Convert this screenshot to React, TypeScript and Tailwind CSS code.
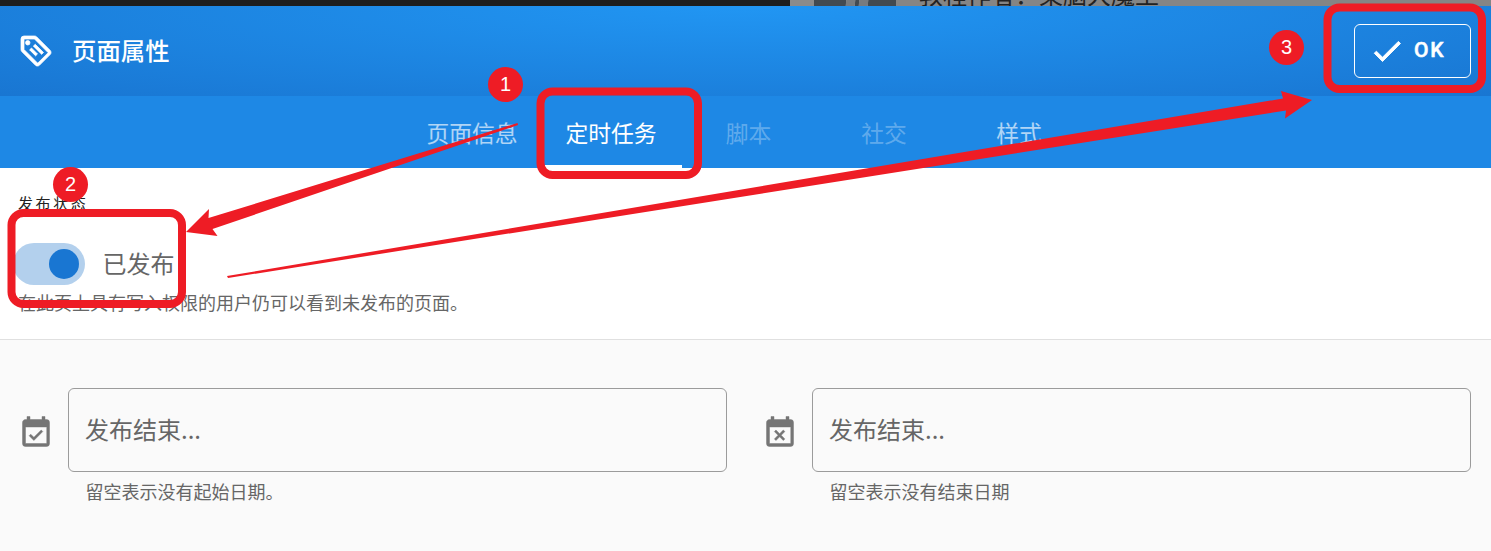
import type { ReactNode } from "react";

const RED = "#ee1c25";

function Icon({ d, className }: { d: string; className: string }) {
  return (
    <svg viewBox="0 0 24 24" className={className} fill="currentColor" aria-hidden="true">
      <path d={d} />
    </svg>
  );
}

const TAG =
  "M6.5 5A1.5 1.5 0 1 0 6.5 8A1.5 1.5 0 1 0 6.5 5M21.41 11.58L12.41 2.58A2 2 0 0 0 11 2H4A2 2 0 0 0 2 4V11A2 2 0 0 0 2.59 12.42L11.59 21.42A2 2 0 0 0 13 22A2 2 0 0 0 14.41 21.41L21.41 14.41A2 2 0 0 0 22 13A2 2 0 0 0 21.41 11.58M13 20L4 11V4H11L20 13M10.09 8.91L11.5 7.5L17 13L15.59 14.41M7.59 11.41L9 10L13 14L11.59 15.41";
const CHECK = "M21 7L9 19L3.5 13.5L4.91 12.09L9 16.17L19.59 5.59Z";
const CALENDAR_CHECK =
  "M19 19H5V8H19M19 3H18V1H16V3H8V1H6V3H5C3.89 3 3 3.9 3 5V19A2 2 0 0 0 5 21H19A2 2 0 0 0 21 19V5A2 2 0 0 0 19 3M16.53 11.06L15.47 10L10.59 14.88L8.47 12.76L7.41 13.82L10.59 17L16.53 11.06Z";
const CALENDAR_REMOVE =
  "M19 19H5V8H19M19 3H18V1H16V3H8V1H6V3H5C3.89 3 3 3.9 3 5V19A2 2 0 0 0 5 21H19A2 2 0 0 0 21 19V5A2 2 0 0 0 19 3M9.31 17L11.75 14.56L14.19 17L15.25 15.94L12.81 13.5L15.25 11.06L14.19 10L11.75 12.44L9.31 10L8.25 11.06L10.69 13.5L8.25 15.94L9.31 17Z";

function Tab({ children, className }: { children: ReactNode; className: string }) {
  return (
    <div className={`flex h-full shrink-0 items-center justify-center border-b-3 pt-[6px] text-[22.8px] ${className}`}>
      {children}
    </div>
  );
}

function DateField({ icon, hint }: { icon: string; hint: string }) {
  return (
    <div className="flex w-[709px] gap-[14px]">
      <Icon d={icon} className="mt-[26.5px] h-9 w-9 shrink-0 stroke-[#757575] stroke-[0.3] text-[#757575]" />
      <div className="flex-1">
        <div className="flex h-[84px] items-center rounded-md border border-[#9b9b9b] pb-[3px] pl-4 text-[24px] text-[#666]">
          发布结束...
        </div>
        <div className="pt-[5px] pl-[17.5px] text-[18px] leading-7 text-[#666]">{hint}</div>
      </div>
    </div>
  );
}

function Badge({ n, className }: { n: number; className: string }) {
  return (
    <div
      className={`absolute flex h-[35px] w-[35px] items-center justify-center rounded-full bg-[#ee1c25] pb-px font-['Liberation_Sans',sans-serif] text-[20px] text-white ${className}`}
    >
      {n}
    </div>
  );
}

export default function App() {
  return (
    <div className="relative flex h-[551px] w-[1491px] flex-col overflow-hidden bg-white font-['Noto_Sans_CJK_SC',sans-serif]">
      <div className="flex h-[6px] shrink-0 overflow-hidden bg-[#858585]">
        <div className="w-[790px] bg-[#1e1e1e]" />
        <div className="w-6 bg-[#8b8b8b]" />
        <div className="w-[32px] bg-[#424a50]" />
        <div className="w-[9px] -skew-x-12 bg-[#777b7e]" />
        <div className="w-[4px] bg-[#424a50]" />
        <div className="w-[9px] -skew-x-12 bg-[#777b7e]" />
        <div className="w-[28px] bg-[#424a50]" />
        <div className="-mt-[20px] ml-[23px] text-[24px] leading-7 whitespace-nowrap text-[#222]">
          教程作者：柔脑大魔王
        </div>
      </div>

      <header className="flex h-[90px] shrink-0 items-center bg-[#1976d2] bg-[radial-gradient(ellipse_at_top,#2196f3,transparent),radial-gradient(ellipse_at_bottom,#1976d2,transparent)] pr-5 pl-[18px] text-white">
        <Icon d={TAG} className="h-9 w-9 stroke-current stroke-[0.5]" />
        <h1 className="ml-[18px] flex-1 pb-[3px] text-[24.4px] leading-9 font-medium">页面属性</h1>
        <button className="flex h-[54px] w-[117px] items-center rounded-md border border-white pl-[14px]">
          <Icon d={CHECK} className="h-9 w-9 stroke-current stroke-[0.6]" />
          <span className="ml-[9px] font-['Roboto',sans-serif] text-[21px] font-medium tracking-[1.9px] [-webkit-text-stroke:0.5px_white]">
            OK
          </span>
        </button>
      </header>

      <nav className="flex h-[72px] shrink-0 bg-[#1e88e5] pl-[400px]">
        <Tab className="w-[144px] border-transparent text-white/65">页面信息</Tab>
        <Tab className="w-[138px] border-white pr-1 text-white">定时任务</Tab>
        <Tab className="w-[133px] border-transparent text-white/30">脚本</Tab>
        <Tab className="w-[138px] border-transparent text-white/30">社交</Tab>
        <Tab className="w-[132px] border-transparent text-white/65">样式</Tab>
      </nav>

      <section className="h-[172px] shrink-0 border-b border-[#e0e0e0] pt-[23px] pl-[18px]">
        <div className="text-[15px] leading-6 tracking-[2.6px] text-[#222]">发布状态</div>
        <div className="mt-[28px] -ml-[5px] flex h-[42px] items-center">
          <div className="flex h-[42px] w-[72px] items-center justify-end rounded-full bg-[#b3d0ed] pr-[6px]">
            <div className="h-[30px] w-[30px] rounded-full bg-[#1976d2]" />
          </div>
          <div className="ml-[17.5px] pb-[3px] text-[24px] text-[#666]">已发布</div>
        </div>
        <div className="mt-[3px] text-[18px] leading-7 text-[#666]">
          在此页上具有写入权限的用户仍可以看到未发布的页面。
        </div>
      </section>

      <section className="flex flex-1 justify-between bg-[#fafafa] pt-12 pr-5 pl-[18px]">
        <DateField icon={CALENDAR_CHECK} hint="留空表示没有起始日期。" />
        <DateField icon={CALENDAR_REMOVE} hint="留空表示没有结束日期" />
      </section>

      <svg className="pointer-events-none absolute inset-0" width="1491" height="551" fill={RED} aria-hidden="true">
        <g fill="none" stroke={RED} strokeWidth="8">
          <rect x="540.5" y="91.5" width="157.500" height="83.500" rx="12" />
          <rect x="11.5" y="213" width="170.500" height="91" rx="12" />
          <rect x="1327.5" y="7.500" width="154.500" height="81.500" rx="12" />
        </g>
        <path d="M517.5 123L208.5 218L209 209L186 232L217.5 236L212.5 229L518 125Z" />
        <path d="M227 276L1283 98.500L1281 91L1312 100L1285 118.500L1286 110.500L228 278Z" />
      </svg>
      <Badge n={1} className="top-[67px] left-[488px]" />
      <Badge n={2} className="top-[167px] left-[53px]" />
      <Badge n={3} className="top-[30px] left-[1269px]" />
    </div>
  );
}
